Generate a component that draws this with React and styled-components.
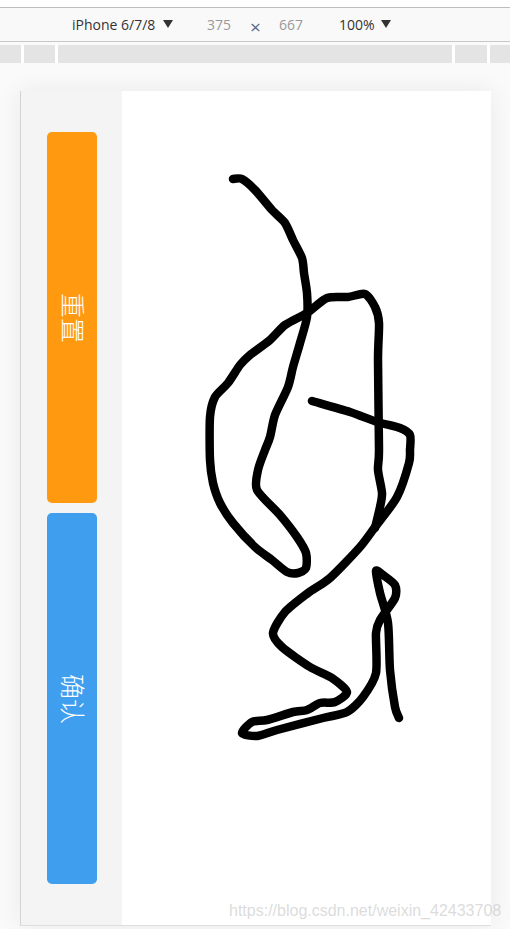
import React from 'react'
import styled, { createGlobalStyle } from 'styled-components'

const strokes = [
  '233,179 242,179 255,190 272,210 285,223 293,240 302,258 304,273 307,293 307,317 300,343 293,367 288,387 275,415 270,437 265,450 258,470 257,490 280,515 297,537 306,553 306,568 298,573 287,572 272,560 255,547 233,523 220,503 213,483 210,460 210,417 215,397 228,383 240,365 250,355 270,340 285,325 307,313 327,298 348,297 365,294 375,307 379,323 378,360 379,450 378,470 382,493 380,507 375,528',
  '312,401 350,412 377,422 400,428 410,435 410,450 409,463 397,497 375,527 360,547 330,578 308,593 285,612 273,633 282,647 310,667 332,678 347,692 335,702 320,703 307,710 293,712 267,720 252,722 242,733 257,736 277,730 323,718 347,712 363,697 376,673 376,633 380,620 395,598 395,585 383,575 376,571 380,593 388,623 390,670 395,707 399,718',
]

// catmull-rom through the points, the pen line has no hard corners
const toPath = (s) => {
  const p = s.split(' ').map((pair) => pair.split(',').map(Number))
  let d = `M${p[0][0]} ${p[0][1]}`
  for (let i = 0; i < p.length - 1; i++) {
    const a = p[i - 1] || p[i]
    const b = p[i]
    const c = p[i + 1]
    const e = p[i + 2] || c
    const x1 = b[0] + (c[0] - a[0]) / 8
    const y1 = b[1] + (c[1] - a[1]) / 8
    const x2 = c[0] - (e[0] - b[0]) / 8
    const y2 = c[1] - (e[1] - b[1]) / 8
    d += ` C${x1.toFixed(1)} ${y1.toFixed(1)} ${x2.toFixed(1)} ${y2.toFixed(1)} ${c[0]} ${c[1]}`
  }
  return d
}

const App = () => {
  return (
    <>
      <GlobalStyle />
      <Page>
        <TopStrip />
        <Toolbar>
          <DeviceName>iPhone 6/7/8</DeviceName>
          <Arrow />
          <Size $left={34}>375</Size>
          <Times>×</Times>
          <Size $left={18}>667</Size>
          <Zoom>100%</Zoom>
          <Arrow />
        </Toolbar>
        <Ruler>
          <RulerPart $w={21} />
          <RulerPart $w={31} />
          <RulerPart $w={394} />
          <RulerPart $w={32} />
          <RulerPart $w={20} />
        </Ruler>
        <Stage>
          <Device>
            <Sidebar>
              <ActionButton $bg="#ff9a10"><Label>重置</Label></ActionButton>
              <ActionButton $bg="#409eef"><Label>确认</Label></ActionButton>
            </Sidebar>
            <Canvas>
              <svg width="369" height="834" viewBox="122 91 369 834">
                {strokes.map((s) => (
                  <path
                    key={s}
                    d={toPath(s)}
                    fill="none"
                    stroke="#000"
                    strokeWidth="8.5"
                    strokeLinecap="round"
                    strokeLinejoin="round"
                  />
                ))}
              </svg>
            </Canvas>
          </Device>
        </Stage>
        <Watermark>https://blog.csdn.net/weixin_42433708</Watermark>
      </Page>
    </>
  )
}

export default App

const GlobalStyle = createGlobalStyle`
  html, body {
    margin: 0;
    padding: 0;
    background: #fafafa;
  }
`
const Page = styled.div`
  position: relative;
  width: 510px;
  height: 929px;
  overflow: hidden;
  font-family: "Open Sans", "Noto Sans", sans-serif;
`
const TopStrip = styled.div`
  height: 7px;
  background: #fff;
  border-bottom: 1px solid #bdbdbd;
`
const Toolbar = styled.div`
  height: 33px;
  padding-left: 72px;
  display: flex;
  align-items: center;
  background: #f9f9f9;
  border-bottom: 1px solid #c8c8c8;
  font-size: 14px;
  color: #333;
`
const DeviceName = styled.span`
  width: 91px;
  white-space: nowrap;
`
const Arrow = styled.i`
  width: 0;
  height: 0;
  border-left: 5px solid transparent;
  border-right: 5px solid transparent;
  border-top: 8px solid #333;
  margin-top: -1px;
`
const Size = styled.span`
  margin-left: ${(p) => p.$left}px;
  color: #999;
`
const Times = styled.span`
  margin-left: 19px;
  color: #5a6a8a;
  font-size: 19px;
  margin-top: 4px;
`
const Zoom = styled.span`
  margin-left: 36px;
  width: 42px;
`
const Ruler = styled.div`
  margin-top: 3px;
  height: 18px;
  display: flex;
  gap: 3px;
  background: #fff;
`
const RulerPart = styled.div`
  width: ${(p) => p.$w}px;
  background: #e4e4e4;
`
const Stage = styled.div`
  padding: 28px 0 0 20px;
`
const Device = styled.div`
  width: 470px;
  height: 834px;
  display: flex;
  border-left: 1px solid #d4d4d4;
  border-bottom: 1px solid #dedede;
  box-shadow: 0 0 24px rgba(0, 0, 0, 0.07);
`
const Sidebar = styled.div`
  width: 50px;
  padding: 41px 25px 41px 26px;
  display: flex;
  flex-direction: column;
  gap: 10px;
  background: #f4f4f4;
`
const ActionButton = styled.div`
  flex: 1;
  display: flex;
  align-items: center;
  justify-content: center;
  border-radius: 5px;
  background: ${(p) => p.$bg};
`
const Label = styled.span`
  transform: rotate(90deg) translateY(-2px);
  white-space: nowrap;
  color: #fff;
  font-family: "Noto Sans CJK SC", sans-serif;
  font-weight: 300;
  font-size: 25px;
`
const Canvas = styled.div`
  flex: 1;
  background: #fff;

  svg {
    display: block;
  }
`
const Watermark = styled.div`
  position: absolute;
  left: 229px;
  top: 901px;
  font-family: "Liberation Sans", sans-serif;
  font-size: 16px;
  line-height: 20px;
  color: rgba(190, 190, 190, 0.55);
  white-space: nowrap;
`
